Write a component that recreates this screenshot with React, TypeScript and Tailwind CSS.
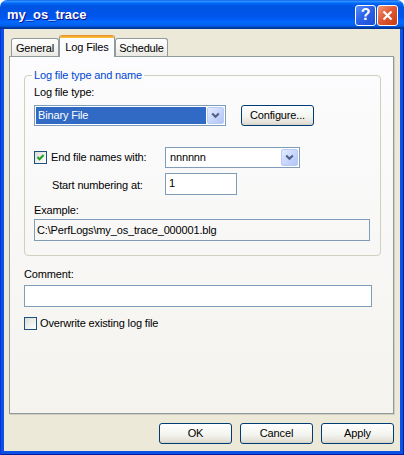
import React from "react";

const font = "font-['Liberation_Sans',Arial,sans-serif]";

function DropButton() {
  return (
    <div className="w-[17px] h-[17px] shrink-0 rounded-[2px] border border-[#B9CBF3] bg-[linear-gradient(135deg,#E4ECFE_0%,#C8D7FC_50%,#B1C5F6_100%)] flex items-center justify-center">
      <svg width="9" height="7" viewBox="0 0 9 7">
        <path d="M1.2 1.5 L4.5 4.8 L7.8 1.5" fill="none" stroke="#4D6185" strokeWidth="2" />
      </svg>
    </div>
  );
}

function Checkbox({ checked }: { checked?: boolean }) {
  return (
    <div className="w-[13px] h-[13px] shrink-0 border border-[#1C5180] bg-[linear-gradient(135deg,#DCDCD7,#FFFFFF)] flex items-center justify-center">
      {checked && (
        <svg width="11" height="11" viewBox="0 0 11 11">
          <path d="M2.5 5 L4.5 7.2 L8.6 3" fill="none" stroke="#21A121" strokeWidth="2" />
        </svg>
      )}
    </div>
  );
}

function XPButton({ label }: { label: string }) {
  return (
    <div className="w-[73px] h-[21px] rounded-[3px] border border-[#003C74] bg-[linear-gradient(to_bottom,#FFFFFF_0%,#F4F4F0_55%,#E3E0D6_90%,#D6D0C5_100%)] flex items-center justify-center text-black">
      {label}
    </div>
  );
}

export default function App() {
  return (
    <div className={`w-[404px] h-[455px] bg-white ${font} text-[11px] leading-[13px] tracking-[-0.15px] text-black`}>
      <div className="w-[404px] h-[455px] rounded-t-[7px] overflow-hidden flex flex-col">
        {/* Title bar */}
        <div className="h-[29px] shrink-0 flex items-center pl-[7px] pr-[6px] bg-[linear-gradient(to_bottom,#0058EE_0%,#3A93FF_4%,#288EFF_6%,#127DFF_8%,#036FFC_10%,#0262EE_14%,#0057E5_20%,#0054E3_24%,#0055EB_56%,#005BF5_66%,#026AFE_76%,#0062EF_86%,#0052D6_92%,#0040AB_94%,#003092_100%)]">
          <span className="flex-1 text-white font-bold text-[13px] leading-[16px] tracking-normal [text-shadow:1px_1px_#0F1089]">my_os_trace</span>
          <div className="flex gap-[1px] mt-[1px]">
            <div className="w-[21px] h-[21px] rounded-[3px] border border-white bg-[linear-gradient(135deg,#5A8EF8_0%,#2C63E8_45%,#1D4BD6_100%)] flex items-center justify-center text-white font-bold text-[16px] leading-[16px]">
              ?
            </div>
            <div className="w-[21px] h-[21px] rounded-[3px] border border-white bg-[linear-gradient(135deg,#F09A7C_0%,#E15A35_45%,#C43A13_100%)] flex items-center justify-center">
              <svg width="11" height="11" viewBox="0 0 11 11">
                <path d="M1.5 1.5 L9.5 9.5 M9.5 1.5 L1.5 9.5" stroke="white" strokeWidth="2.2" />
              </svg>
            </div>
          </div>
        </div>

        {/* Frame */}
        <div className="flex-1 flex flex-col px-[4px] pb-[4px] bg-[#0B52E4] shadow-[inset_1px_0_#0831D9,inset_-1px_0_#001EA0,inset_0_-1px_#001EA0]">
          <div className="flex-1 bg-[#ECE9D8] flex flex-col">
            {/* Tabs */}
            <div className="h-[22px] mt-[6px] -mb-px pl-[7px] flex items-end">
              <div className="w-[48px] h-[18px] mb-[1px] rounded-t-[3px] border border-b-0 border-[#919B9C] bg-[linear-gradient(to_bottom,#FFFFFF,#F3F3EF_60%,#E9E8E2)] flex items-center justify-center pt-[1px]">
                General
              </div>
              <div className="relative z-10 w-[56px] h-[22px] rounded-t-[3px] border-x border-[#919B9C] bg-[#FCFCFE] flex flex-col overflow-hidden">
                <div className="h-[3px] bg-[linear-gradient(to_bottom,#E68B2C,#FFC73C)]" />
                <div className="flex-1 flex items-center justify-center">Log Files</div>
              </div>
              <div className="w-[53px] h-[18px] mb-[1px] rounded-t-[3px] border border-b-0 border-[#919B9C] bg-[linear-gradient(to_bottom,#FFFFFF,#F3F3EF_60%,#E9E8E2)] flex items-center justify-center pt-[1px]">
                Schedule
              </div>
            </div>

            {/* Panel */}
            <div className="ml-[5px] w-[385px] h-[358px] border border-[#919B9C] bg-[linear-gradient(to_bottom,#FCFCFE,#F4F3EE)] shadow-[1px_1px_0_#D0CEBF] flex flex-col pl-[14px]">
              {/* Group box */}
              <div className="relative mt-[18px] w-[357px] border border-[#D0D0BF] rounded-[4px] pl-[9px] pb-[14px] flex flex-col">
                <span className="absolute left-[7px] top-[-7px] px-[2px] bg-[#FBFBFA] text-[#0046D5]">
                  Log file type and name
                </span>
                <div className="mt-[10px]">Log file type:</div>
                <div className="mt-[6px] flex items-center gap-[15px]">
                  <div className="w-[192px] h-[21px] border border-[#7F9DB9] bg-white flex items-center p-[1px]">
                    <div className="flex-1 h-full pr-[1px]">
                      <div className="h-full bg-[#316AC5] text-white flex items-center pl-[2px]">Binary File</div>
                    </div>
                    <DropButton />
                  </div>
                  <XPButton label="Configure..." />
                </div>
                <div className="mt-[21px] flex items-center">
                  <div className="w-[131px] flex items-center">
                    <Checkbox checked />
                    <span className="ml-[4px]">End file names with:</span>
                  </div>
                  <div className="w-[135px] h-[21px] border border-[#7F9DB9] bg-white flex items-center p-[1px]">
                    <div className="flex-1 pl-[3px]">nnnnnn</div>
                    <DropButton />
                  </div>
                </div>
                <div className="mt-[5px] flex items-start">
                  <div className="w-[131px] pl-[18px] mt-[6px]">Start numbering at:</div>
                  <div className="w-[72px] h-[22px] border border-[#7F9DB9] bg-white flex items-center pl-[3px] pb-[2px]">1</div>
                </div>
                <div className="mt-[9px]">Example:</div>
                <div className="mt-[2px] w-[336px] h-[22px] border border-[#7F9DB9] flex items-center pl-[2px]">
                  C:\PerfLogs\my_os_trace_000001.blg
                </div>
              </div>

              <div className="mt-[12px]">Comment:</div>
              <div className="mt-[4px] w-[348px] h-[22px] border border-[#7F9DB9] bg-white" />
              <div className="mt-[10px] flex items-center">
                <Checkbox />
                <span className="ml-[3px]">Overwrite existing log file</span>
              </div>
            </div>

            {/* Buttons */}
            <div className="mt-[9px] pr-[6px] flex justify-end gap-[8px]">
              <XPButton label="OK" />
              <XPButton label="Cancel" />
              <XPButton label="Apply" />
            </div>
          </div>
        </div>
      </div>
    </div>
  );
}
